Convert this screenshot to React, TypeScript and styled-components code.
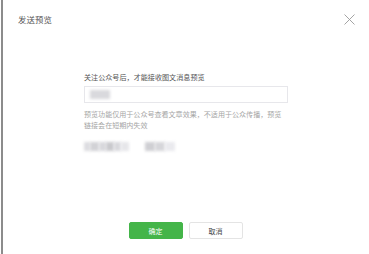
import React from "react";
import styled, { createGlobalStyle } from "styled-components";

const GlobalStyle = createGlobalStyle`
  html, body {
    margin: 0;
    padding: 0;
    background: #ffffff;
  }
  body {
    font-family: "Noto Sans CJK SC", "Noto Sans", sans-serif;
    color: #353535;
  }
`;

const Dialog = styled.section`
  box-sizing: border-box;
  width: 369px;
  height: 254px;
  display: flex;
  flex-direction: column;
  background: #ffffff;
  border-left: 2px solid #8c8c8c;
  margin-left: 1px;
`;

const Header = styled.header`
  display: flex;
  justify-content: space-between;
  align-items: center;
  height: 38px;
  padding: 0 15px 0 15px;
`;

const Title = styled.h3`
  margin: 0;
  font-size: 8.4px;
  font-weight: 400;
  color: #555;
  letter-spacing: 0.1px;
`;

const Close = styled.button`
  border: 0;
  background: none;
  padding: 0;
  width: 11px;
  height: 11px;
  display: flex;
  cursor: pointer;
`;

const Body = styled.div`
  display: flex;
  flex-direction: column;
  padding: 34px 0 0 81px;
  width: 204px;
`;

const Label = styled.p`
  margin: 0;
  font-size: 7.1px;
  line-height: 10px;
  color: #555;
`;

const Field = styled.div`
  box-sizing: border-box;
  margin-top: 4px;
  height: 17px;
  border: 1px solid #e7e7eb;
  display: flex;
  align-items: center;
  padding-left: 5px;
`;

const Blur = styled.span<{ $w: number; $tone: string }>`
  display: inline-block;
  width: ${(p) => p.$w}px;
  height: 9px;
  background: ${(p) => p.$tone};
  filter: blur(1.4px);
`;

const Hint = styled.p`
  margin: 6px 0 0;
  font-size: 7.05px;
  line-height: 10.5px;
  color: #a6a6a6;
`;

const Account = styled.div`
  display: flex;
  align-items: center;
  margin-top: 11px;
  height: 10px;
`;

const Gap = styled.span<{ $w: number }>`
  display: inline-block;
  width: ${(p) => p.$w}px;
`;

const Footer = styled.footer`
  display: flex;
  justify-content: center;
  gap: 6px;
  margin-top: auto;
  padding-bottom: 15px;
  padding-right: 2px;
`;

const Button = styled.button<{ $primary?: boolean }>`
  box-sizing: border-box;
  width: 54px;
  height: 17px;
  border-radius: 2px;
  font-family: inherit;
  font-size: 7px;
  padding: 0;
  cursor: pointer;
  border: 1px solid ${(p) => (p.$primary ? "#44b549" : "#e4e4e4")};
  background: ${(p) => (p.$primary ? "#44b549" : "#ffffff")};
  color: ${(p) => (p.$primary ? "#ffffff" : "#444")};
`;

const accountBlocks: [number, string][] = [
  [6, "#dcdce0"],
  [9, "#d2d2d6"],
  [7, "#d8d8dc"],
  [8, "#c9c9cd"],
  [7, "#d8d8dc"],
  [8, "#e6e6ea"],
];

export default function App() {
  return (
    <>
      <GlobalStyle />
      <Dialog>
        <Header>
          <Title>发送预览</Title>
          <Close aria-label="关闭">
            <svg width="11" height="11" viewBox="0 0 11 11">
              <path d="M0.5 0.5L10.5 10.5M10.5 0.5L0.5 10.5" stroke="#9a9a9a" strokeWidth="0.9" fill="none" />
            </svg>
          </Close>
        </Header>
        <Body>
          <Label>关注公众号后，才能接收图文消息预览</Label>
          <Field>
            <Blur $w={20} $tone="#d9d9dd" />
          </Field>
          <Hint>
            预览功能仅用于公众号查看文章效果，不适用于公众传播，预览
            <br />
            链接会在短期内失效
          </Hint>
          <Account>
            {accountBlocks.map(([w, tone], i) => (
              <Blur key={i} $w={w} $tone={tone} />
            ))}
            <Gap $w={16} />
            <Blur $w={10} $tone="#cfcfd3" />
            <Blur $w={10} $tone="#d6d6da" />
            <Blur $w={10} $tone="#eaeaee" />
          </Account>
        </Body>
        <Footer>
          <Button $primary>确定</Button>
          <Button>取消</Button>
        </Footer>
      </Dialog>
    </>
  );
}
